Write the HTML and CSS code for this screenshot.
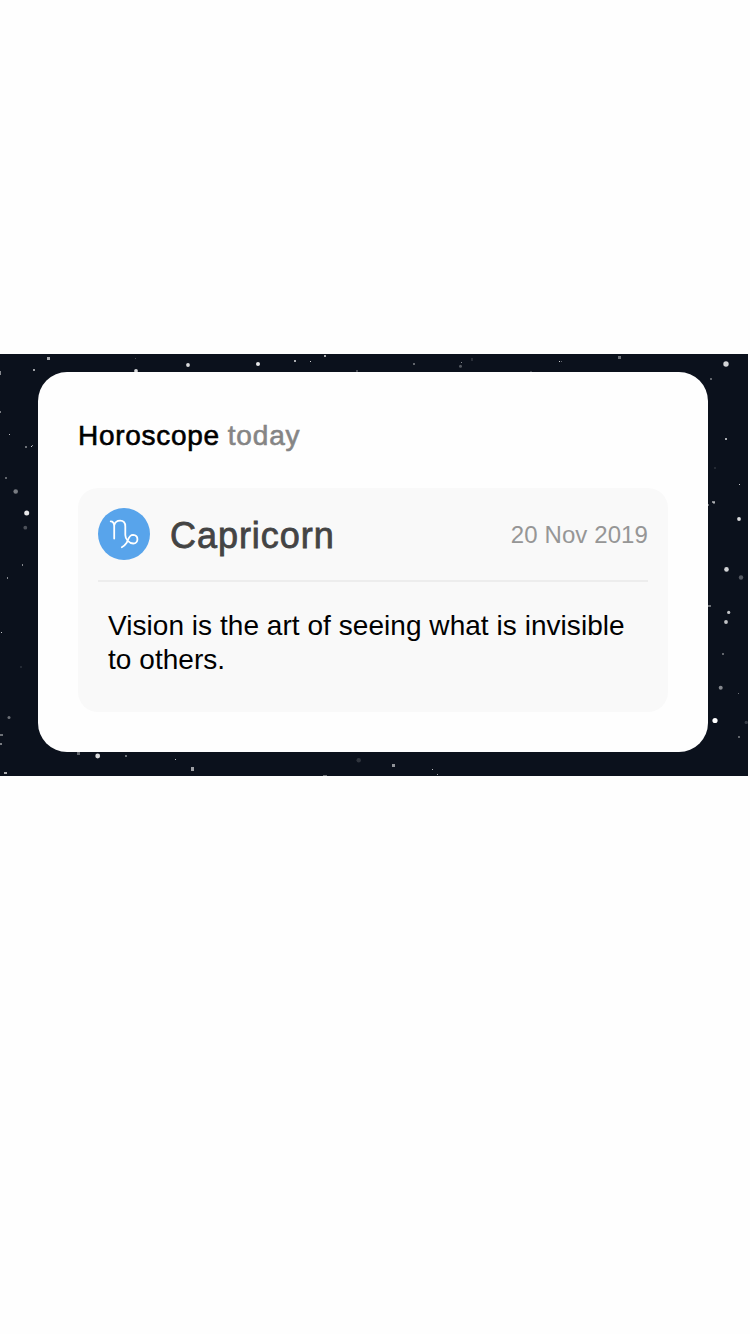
FILE: index.html
```html
<!DOCTYPE html>
<html lang="en">
<head>
<meta charset="utf-8">
<title>Horoscope today</title>
<link rel="stylesheet" href="styles.css">
</head>
<body>
<main class="sky">
  <svg class="stars" viewBox="0 0 748 422" aria-hidden="true">
    <g class="squares">
      <rect x="47" y="3" width="3" height="3" opacity=".65"/><rect x="33" y="15" width="2" height="2" opacity=".6"/>
      <rect x="0" y="17" width="1" height="4" opacity=".5"/><rect x="135" y="4" width="1" height="1" opacity=".25"/>
      <rect x="294" y="6" width="2" height="2" opacity=".65"/><rect x="310" y="7" width="1" height="1" opacity=".8"/>
      <rect x="324" y="1" width="2" height="2" opacity=".65"/><rect x="356" y="16" width="2" height="2" opacity=".25"/>
      <rect x="413" y="9" width="2" height="2" opacity=".35"/><rect x="461" y="8" width="1" height="1" opacity=".5"/>
      <rect x="471" y="4" width="2" height="3" opacity=".12"/><rect x="559" y="7" width="1" height="1" opacity=".8"/>
      <rect x="561" y="7" width="1" height="1" opacity=".35"/><rect x="618" y="2" width="3" height="3" opacity=".4"/>
      <rect x="710" y="24" width="2" height="2" opacity=".35"/><rect x="530" y="17" width="2" height="1" opacity=".2"/>
      <rect x="0" y="57" width="1" height="2" opacity=".45"/><rect x="9" y="80" width="1" height="1" opacity=".7"/>
      <rect x="25" y="92" width="2" height="2" opacity=".4"/><rect x="31" y="92" width="1" height="1" opacity=".8"/>
      <rect x="32" y="91" width="1" height="1" opacity=".5"/><rect x="5" y="123" width="2" height="2" opacity=".35"/>
      <rect x="22" y="210" width="1" height="2" opacity=".5"/><rect x="7" y="223" width="1" height="2" opacity=".5"/>
      <rect x="1" y="278" width="1" height="1" opacity=".75"/><rect x="20" y="312" width="2" height="2" opacity=".1"/>
      <rect x="0" y="380" width="3" height="2" opacity=".4"/><rect x="0" y="389" width="2" height="2" opacity=".45"/>
      <rect x="4" y="418" width="3" height="2" opacity=".65"/><rect x="725" y="84" width="2" height="2" opacity=".65"/>
      <rect x="714" y="113" width="2" height="2" opacity=".1"/><rect x="739" y="130" width="1" height="1" opacity=".75"/>
      <rect x="712" y="147" width="3" height="2" opacity=".5"/><rect x="713" y="148" width="2" height="2" opacity=".35"/>
      <rect x="708" y="150" width="1" height="2" opacity=".4"/><rect x="708" y="251" width="3" height="2" opacity=".4"/>
      <rect x="722" y="299" width="2" height="2" opacity=".35"/><rect x="738" y="339" width="1" height="1" opacity=".4"/>
      <rect x="738" y="382" width="2" height="2" opacity=".35"/><rect x="77" y="398" width="3" height="3" opacity=".35"/>
      <rect x="125" y="401" width="2" height="2" opacity=".4"/><rect x="175" y="405" width="1" height="1" opacity=".7"/>
      <rect x="191" y="413" width="3" height="4" opacity=".6"/><rect x="392" y="410" width="3" height="3" opacity=".55"/>
      <rect x="432" y="415" width="1" height="1" opacity=".7"/><rect x="437" y="420" width="1" height="1" opacity=".6"/>
      <rect x="323" y="421" width="4" height="1" opacity=".4"/>
    </g>
    <g class="dots">
      <circle cx="188" cy="11" r="1.9" opacity=".85"/><circle cx="136" cy="17" r="1.9" opacity=".85"/>
      <circle cx="258" cy="10" r="2" opacity=".9"/><circle cx="460.500" cy="12.300" r="1.500" opacity=".3"/>
      <circle cx="726" cy="10" r="2.700" opacity=".82"/><circle cx="15.700" cy="137.500" r="2.300" opacity=".45"/>
      <circle cx="26.700" cy="159" r="2.500" opacity=".9"/><circle cx="25.300" cy="173.700" r="1.900" opacity=".27"/>
      <circle cx="739" cy="165" r="1.900" opacity=".85"/><circle cx="726.500" cy="215.400" r="2.300" opacity=".82"/>
      <circle cx="741" cy="223.500" r="2.200" opacity=".3"/><circle cx="728.700" cy="258.400" r="1.600" opacity=".75"/>
      <circle cx="726" cy="268" r="1.900" opacity=".75"/><circle cx="720.700" cy="333.700" r="2" opacity=".5"/>
      <circle cx="715" cy="366.500" r="2.600" opacity="1"/><circle cx="746.300" cy="368.400" r="1.700" opacity=".18"/>
      <circle cx="9" cy="363.500" r="1.500" opacity=".4"/><circle cx="97.700" cy="402" r="2.400" opacity=".85"/>
      <circle cx="358.700" cy="406.300" r="2.200" opacity=".15"/>
    </g>
  </svg>
  <section class="card">
    <h1 class="title"><span class="title-name">Horoscope</span> <span class="title-day">today</span></h1>
    <article class="panel">
      <header class="sign">
        <svg class="sign-icon" viewBox="0 0 52 52" aria-hidden="true">
          <circle class="disc" cx="26" cy="26" r="26"/>
          <path class="glyph" d="M12.700 13.300Q16 13.300 16.200 18V30.500M16.200 17.500C17.500 11.300 27.300 10.500 27.300 18.500V27C27.300 31 31 35.500 35.300 35.500C40.700 35.500 41 27 35 26.800C30.500 26.800 30.500 32 28.500 35C27 37.200 25.800 38.200 23.800 39.200"/>
        </svg>
        <h2 class="sign-name">Capricorn</h2>
        <time class="date" datetime="2019-11-20">20 Nov 2019</time>
      </header>
      <p class="message">Vision is the art of seeing what is invisible<br>to others.</p>
    </article>
  </section>
</main>
</body>
</html>
```
FILE: styles.css
```css
* { box-sizing: border-box; }
body {
  margin: 0;
  padding-top: 354px;
  height: 1334px;
  background: #fefefe;
  font-family: "Liberation Sans", Arial, sans-serif;
  color: #000;
}
h1, h2, p { margin: 0; font-weight: 400; }
.sky {
  position: relative;
  width: 748px;
  height: 422px;
  padding: 18px 40px 24px 38px;
  background: #0b111c;
}
.stars { position: absolute; inset: 0; width: 748px; height: 422px; fill: #fff; }
.squares { shape-rendering: crispEdges; }
.card {
  position: relative;
  height: 380px;
  padding: 46px 40px 40px;
  border-radius: 29px;
  background: #fefefe;
}
.title {
  height: 36px;
  margin-bottom: 34px;
  font-size: 28px;
  line-height: 36px;
  white-space: nowrap;
}
.title-name { letter-spacing: .72px; -webkit-text-stroke: .6px #000; }
.title-day { color: #858585; letter-spacing: .85px; -webkit-text-stroke: .6px #858585; }
.panel {
  height: 224px;
  padding: 20px 20px 0;
  border-radius: 20px;
  background: #f9f9f9;
}
.sign {
  display: flex;
  align-items: center;
  height: 74px;
  padding-bottom: 20px;
  border-bottom: 2px solid #ededed;
}
.sign-icon { width: 52px; height: 52px; margin-right: 20px; }
.disc { fill: #58a4eb; }
.glyph { fill: none; stroke: #fff; stroke-width: 1.8; stroke-linecap: round; stroke-linejoin: round; }
.sign-name {
  flex: 1;
  padding-top: 4px;
  font-size: 36px;
  line-height: 44px;
  letter-spacing: .95px;
  color: #444;
  -webkit-text-stroke: .8px #444;
}
.date { padding-top: 2px; font-size: 24px; line-height: 30px; letter-spacing: .1px; color: #969696; }
.message {
  padding: 27px 0 0 10px;
  font-size: 28px;
  line-height: 34px;
  letter-spacing: .045px;
  white-space: nowrap;
}
```
